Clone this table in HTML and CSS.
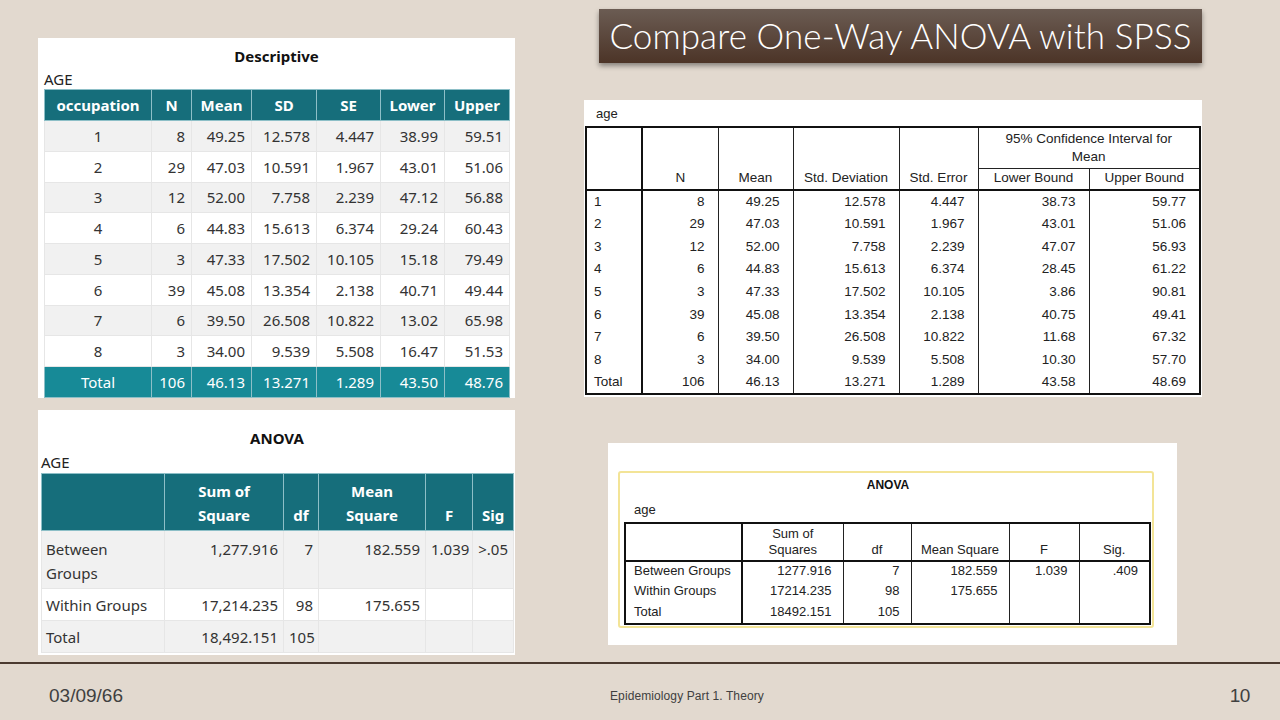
FILE: index.html
```html
<!DOCTYPE html>
<html lang="en">
<head>
<meta charset="utf-8">
<title>Compare One-Way ANOVA with SPSS</title>
<link rel="stylesheet" href="styles.css">
</head>
<body>
<div class="slide">
  <main class="content">
    <section class="col-left">
      <div class="panel desc">
        <div class="ptitle">Descriptive</div>
        <div class="pvar">AGE</div>
        <table class="mtab dtab">
          <colgroup>
            <col style="width:107px"><col style="width:40px"><col style="width:60px"><col style="width:65px"><col style="width:64px"><col style="width:64px"><col style="width:65px">
          </colgroup>
          <thead>
            <tr><th>occupation</th><th>N</th><th>Mean</th><th>SD</th><th>SE</th><th>Lower</th><th>Upper</th></tr>
          </thead>
          <tbody>
            <tr><td>1</td><td>8</td><td>49.25</td><td>12.578</td><td>4.447</td><td>38.99</td><td>59.51</td></tr>
            <tr><td>2</td><td>29</td><td>47.03</td><td>10.591</td><td>1.967</td><td>43.01</td><td>51.06</td></tr>
            <tr><td>3</td><td>12</td><td>52.00</td><td>7.758</td><td>2.239</td><td>47.12</td><td>56.88</td></tr>
            <tr><td>4</td><td>6</td><td>44.83</td><td>15.613</td><td>6.374</td><td>29.24</td><td>60.43</td></tr>
            <tr><td>5</td><td>3</td><td>47.33</td><td>17.502</td><td>10.105</td><td>15.18</td><td>79.49</td></tr>
            <tr><td>6</td><td>39</td><td>45.08</td><td>13.354</td><td>2.138</td><td>40.71</td><td>49.44</td></tr>
            <tr><td>7</td><td>6</td><td>39.50</td><td>26.508</td><td>10.822</td><td>13.02</td><td>65.98</td></tr>
            <tr><td>8</td><td>3</td><td>34.00</td><td>9.539</td><td>5.508</td><td>16.47</td><td>51.53</td></tr>
            <tr class="total"><td>Total</td><td>106</td><td>46.13</td><td>13.271</td><td>1.289</td><td>43.50</td><td>48.76</td></tr>
          </tbody>
        </table>
      </div>
      <div class="panel anl">
        <div class="ptitle">ANOVA</div>
        <div class="pvar">AGE</div>
        <table class="mtab atab">
          <colgroup>
            <col style="width:123px"><col style="width:119px"><col style="width:35px"><col style="width:107px"><col style="width:47px"><col style="width:41px">
          </colgroup>
          <thead>
            <tr><th></th><th>Sum of<br>Square</th><th>df</th><th>Mean<br>Square</th><th>F</th><th>Sig</th></tr>
          </thead>
          <tbody>
            <tr class="tall"><td>Between<br>Groups</td><td>1,277.916</td><td>7</td><td>182.559</td><td>1.039</td><td>&gt;.05</td></tr>
            <tr><td>Within Groups</td><td>17,214.235</td><td>98</td><td>175.655</td><td></td><td></td></tr>
            <tr><td>Total</td><td>18,492.151</td><td>105</td><td></td><td></td><td></td></tr>
          </tbody>
        </table>
      </div>
    </section>

    <section class="col-right">
      <h1 class="title">Compare One-Way ANOVA with SPSS</h1>

      <div class="panel sdesc">
        <div class="svar">age</div>
        <table class="stab">
          <colgroup>
            <col style="width:56px"><col style="width:76px"><col style="width:75px"><col style="width:106px"><col style="width:79px"><col style="width:111px"><col style="width:111px">
          </colgroup>
          <thead>
            <tr class="h1">
              <th rowspan="2" class="lab"></th>
              <th rowspan="2">N</th>
              <th rowspan="2">Mean</th>
              <th rowspan="2">Std. Deviation</th>
              <th rowspan="2">Std. Error</th>
              <th colspan="2" class="ci">95% Confidence Interval for<br>Mean</th>
            </tr>
            <tr class="h2"><th>Lower Bound</th><th>Upper Bound</th></tr>
          </thead>
          <tbody>
            <tr><td>1</td><td>8</td><td>49.25</td><td>12.578</td><td>4.447</td><td>38.73</td><td>59.77</td></tr>
            <tr><td>2</td><td>29</td><td>47.03</td><td>10.591</td><td>1.967</td><td>43.01</td><td>51.06</td></tr>
            <tr><td>3</td><td>12</td><td>52.00</td><td>7.758</td><td>2.239</td><td>47.07</td><td>56.93</td></tr>
            <tr><td>4</td><td>6</td><td>44.83</td><td>15.613</td><td>6.374</td><td>28.45</td><td>61.22</td></tr>
            <tr><td>5</td><td>3</td><td>47.33</td><td>17.502</td><td>10.105</td><td>3.86</td><td>90.81</td></tr>
            <tr><td>6</td><td>39</td><td>45.08</td><td>13.354</td><td>2.138</td><td>40.75</td><td>49.41</td></tr>
            <tr><td>7</td><td>6</td><td>39.50</td><td>26.508</td><td>10.822</td><td>11.68</td><td>67.32</td></tr>
            <tr><td>8</td><td>3</td><td>34.00</td><td>9.539</td><td>5.508</td><td>10.30</td><td>57.70</td></tr>
            <tr><td>Total</td><td>106</td><td>46.13</td><td>13.271</td><td>1.289</td><td>43.58</td><td>48.69</td></tr>
          </tbody>
        </table>
      </div>

      <div class="panel sanova">
        <div class="ybox">
          <div class="stitle">ANOVA</div>
          <div class="svar svar2">age</div>
          <table class="stab satab">
            <colgroup>
              <col style="width:117px"><col style="width:101px"><col style="width:68px"><col style="width:98px"><col style="width:70px"><col style="width:71px">
            </colgroup>
            <thead>
              <tr><th class="lab"></th><th>Sum of<br>Squares</th><th>df</th><th>Mean Square</th><th>F</th><th>Sig.</th></tr>
            </thead>
            <tbody>
              <tr><td>Between Groups</td><td>1277.916</td><td>7</td><td>182.559</td><td>1.039</td><td>.409</td></tr>
              <tr><td>Within Groups</td><td>17214.235</td><td>98</td><td>175.655</td><td></td><td></td></tr>
              <tr><td>Total</td><td>18492.151</td><td>105</td><td></td><td></td><td></td></tr>
            </tbody>
          </table>
        </div>
      </div>
    </section>
  </main>

  <div class="rule"></div>

  <footer class="footer">
    <span class="fdate">03/09/66</span>
    <span class="fmid">Epidemiology Part 1. Theory</span>
    <span class="fnum">10</span>
  </footer>
</div>
</body>
</html>
```

FILE: styles.css
```css
* { box-sizing: border-box; }

html, body {
  margin: 0;
  padding: 0;
}

body {
  width: 1280px;
  height: 720px;
  overflow: hidden;
  background: #e2d9cf;
}

.slide {
  width: 1280px;
  height: 720px;
  display: flex;
  flex-direction: column;
  background: #e2d9cf;
}

.content {
  height: 662px;
  display: flex;
  align-items: flex-start;
}

/* ---------- left column ---------- */
.col-left {
  margin-left: 38px;
  width: 477px;
  padding-top: 38px;
  display: flex;
  flex-direction: column;
  gap: 12px;
}

.panel {
  background: #ffffff;
}

.desc {
  height: 360px;
  padding: 8px 6px 0 6px;
}

.anl {
  height: 245px;
  padding: 18px 2px 0 3px;
}

.ptitle {
  font-family: "Noto Sans", "Open Sans", sans-serif;
  font-weight: 700;
  font-size: 15px;
  line-height: 20px;
  color: #111;
  text-align: center;
}

.pvar {
  font-family: "Noto Sans", "Open Sans", sans-serif;
  font-size: 15px;
  line-height: 20px;
  color: #222;
  margin-top: 3px;
}

.anl .pvar {
  margin-top: 4px;
  margin-bottom: 1px;
}

.mtab {
  border-collapse: collapse;
  table-layout: fixed;
  font-family: "Noto Sans", "Open Sans", sans-serif;
  font-size: 15px;
  color: #333;
}

.dtab { width: 465px; }
.atab { width: 472px; }

.mtab th {
  background: #166e7b;
  color: #ffffff;
  font-weight: 700;
  border: 1px solid #8dbfc7;
  text-align: center;
  padding: 0 2px;
}

.mtab td {
  border: 1px solid #e6e6e6;
  text-align: right;
  padding: 0 6px;
  white-space: nowrap;
}

.mtab tbody tr:nth-child(odd) td { background: #f1f1f1; }
.mtab tbody tr:nth-child(even) td { background: #ffffff; }

.dtab th { height: 31px; }
.dtab td { height: 30.75px; }
.dtab td:first-child { text-align: center; }

.mtab tbody tr.total td {
  background: #178a97;
  color: #ffffff;
  border-color: #8dbfc7;
}

.atab th {
  height: 57px;
  line-height: 24px;
  vertical-align: bottom;
  padding-bottom: 3px;
}

.atab td {
  height: 32px;
  line-height: 24px;
  padding: 0 5px;
}

.atab td:first-child {
  text-align: left;
  padding-left: 4px;
}

.atab tr.tall td {
  height: 58px;
  vertical-align: top;
  padding-top: 6px;
}

/* ---------- right column ---------- */
.col-right {
  margin-left: 69px;
  width: 618px;
  display: flex;
  flex-direction: column;
}

.title {
  margin: 9px 0 0 15px;
  width: 603px;
  height: 54px;
  display: flex;
  align-items: center;
  justify-content: center;
  background: linear-gradient(#6b5c53, #4c3427);
  color: #ffffff;
  font-family: "Lato", "Open Sans", sans-serif;
  font-weight: 300;
  font-size: 35px;
  letter-spacing: 0.1px;
  padding-bottom: 2px;
  box-shadow: 0 3px 5px rgba(0, 0, 0, 0.4);
}

.sdesc {
  margin-top: 37px;
  height: 297px;
  padding: 6px 0 0 1px;
}

.svar {
  font-family: "Liberation Sans", Arial, sans-serif;
  font-size: 13px;
  line-height: 16px;
  color: #222;
  padding-left: 11px;
  margin-bottom: 4px;
}

.stab {
  border-collapse: collapse;
  table-layout: fixed;
  width: 614px;
  font-family: "Liberation Sans", Arial, sans-serif;
  font-size: 13.5px;
  color: #222;
  border: 2px solid #111;
}

.stab th {
  font-weight: 400;
  border-left: 1px solid #222;
  border-right: 1px solid #222;
  border-bottom: 2px solid #111;
  vertical-align: bottom;
  text-align: center;
  padding: 0 2px 2px;
  line-height: 18px;
  white-space: nowrap;
}

.stab th.lab,
.stab td:first-child {
  border-right: 2px solid #111;
}

.stab .h1 th { height: 41px; }
.stab .h1 th.ci {
  border-bottom: 1px solid #222;
  vertical-align: top;
  padding-top: 2px;
  padding-bottom: 0;
}
.stab .h2 th { height: 22px; }

.stab td {
  height: 22.7px;
  line-height: 18px;
  text-align: right;
  padding: 0 13px 0 4px;
  border-left: 1px solid #222;
  border-right: 1px solid #222;
  white-space: nowrap;
}

.stab td:first-child {
  text-align: left;
  padding-left: 7px;
  padding-right: 2px;
}

/* SPSS ANOVA */
.sanova {
  margin: 46px 0 0 24px;
  width: 569px;
  height: 202px;
  padding: 28px 0 0 10px;
}

.ybox {
  width: 536px;
  height: 157px;
  border: 2px solid #f3e497;
  border-radius: 3px;
  padding: 4px 0 0 4px;
}

.stitle {
  font-family: "Liberation Sans", Arial, sans-serif;
  font-weight: 700;
  font-size: 12px;
  line-height: 16px;
  color: #111;
  text-align: center;
}

.svar2 {
  margin-top: 9px;
  padding-left: 10px;
}

.satab {
  width: 525px;
  font-size: 13px;
}

.satab th {
  height: 38px;
  line-height: 16px;
  padding-bottom: 2px;
}

.satab td {
  height: 21px;
  line-height: 17px;
  vertical-align: top;
  padding-right: 11px;
}

.satab td:first-child {
  padding-left: 8px;
}

.satab tbody tr:first-child td { padding-top: 0; }

/* ---------- footer ---------- */
.rule {
  height: 2px;
  background: #4b3a30;
}

.footer {
  flex: 1;
  display: grid;
  grid-template-columns: 561px 1fr auto;
  align-items: center;
  padding: 8px 30px 0 49px;
  font-family: "Liberation Sans", Arial, sans-serif;
  color: #404040;
}

.fdate {
  font-size: 19px;
  letter-spacing: 0;
}

.fmid {
  font-size: 12px;
  letter-spacing: 0.1px;
}

.fnum {
  font-size: 19px;
  letter-spacing: -0.4px;
}
```
